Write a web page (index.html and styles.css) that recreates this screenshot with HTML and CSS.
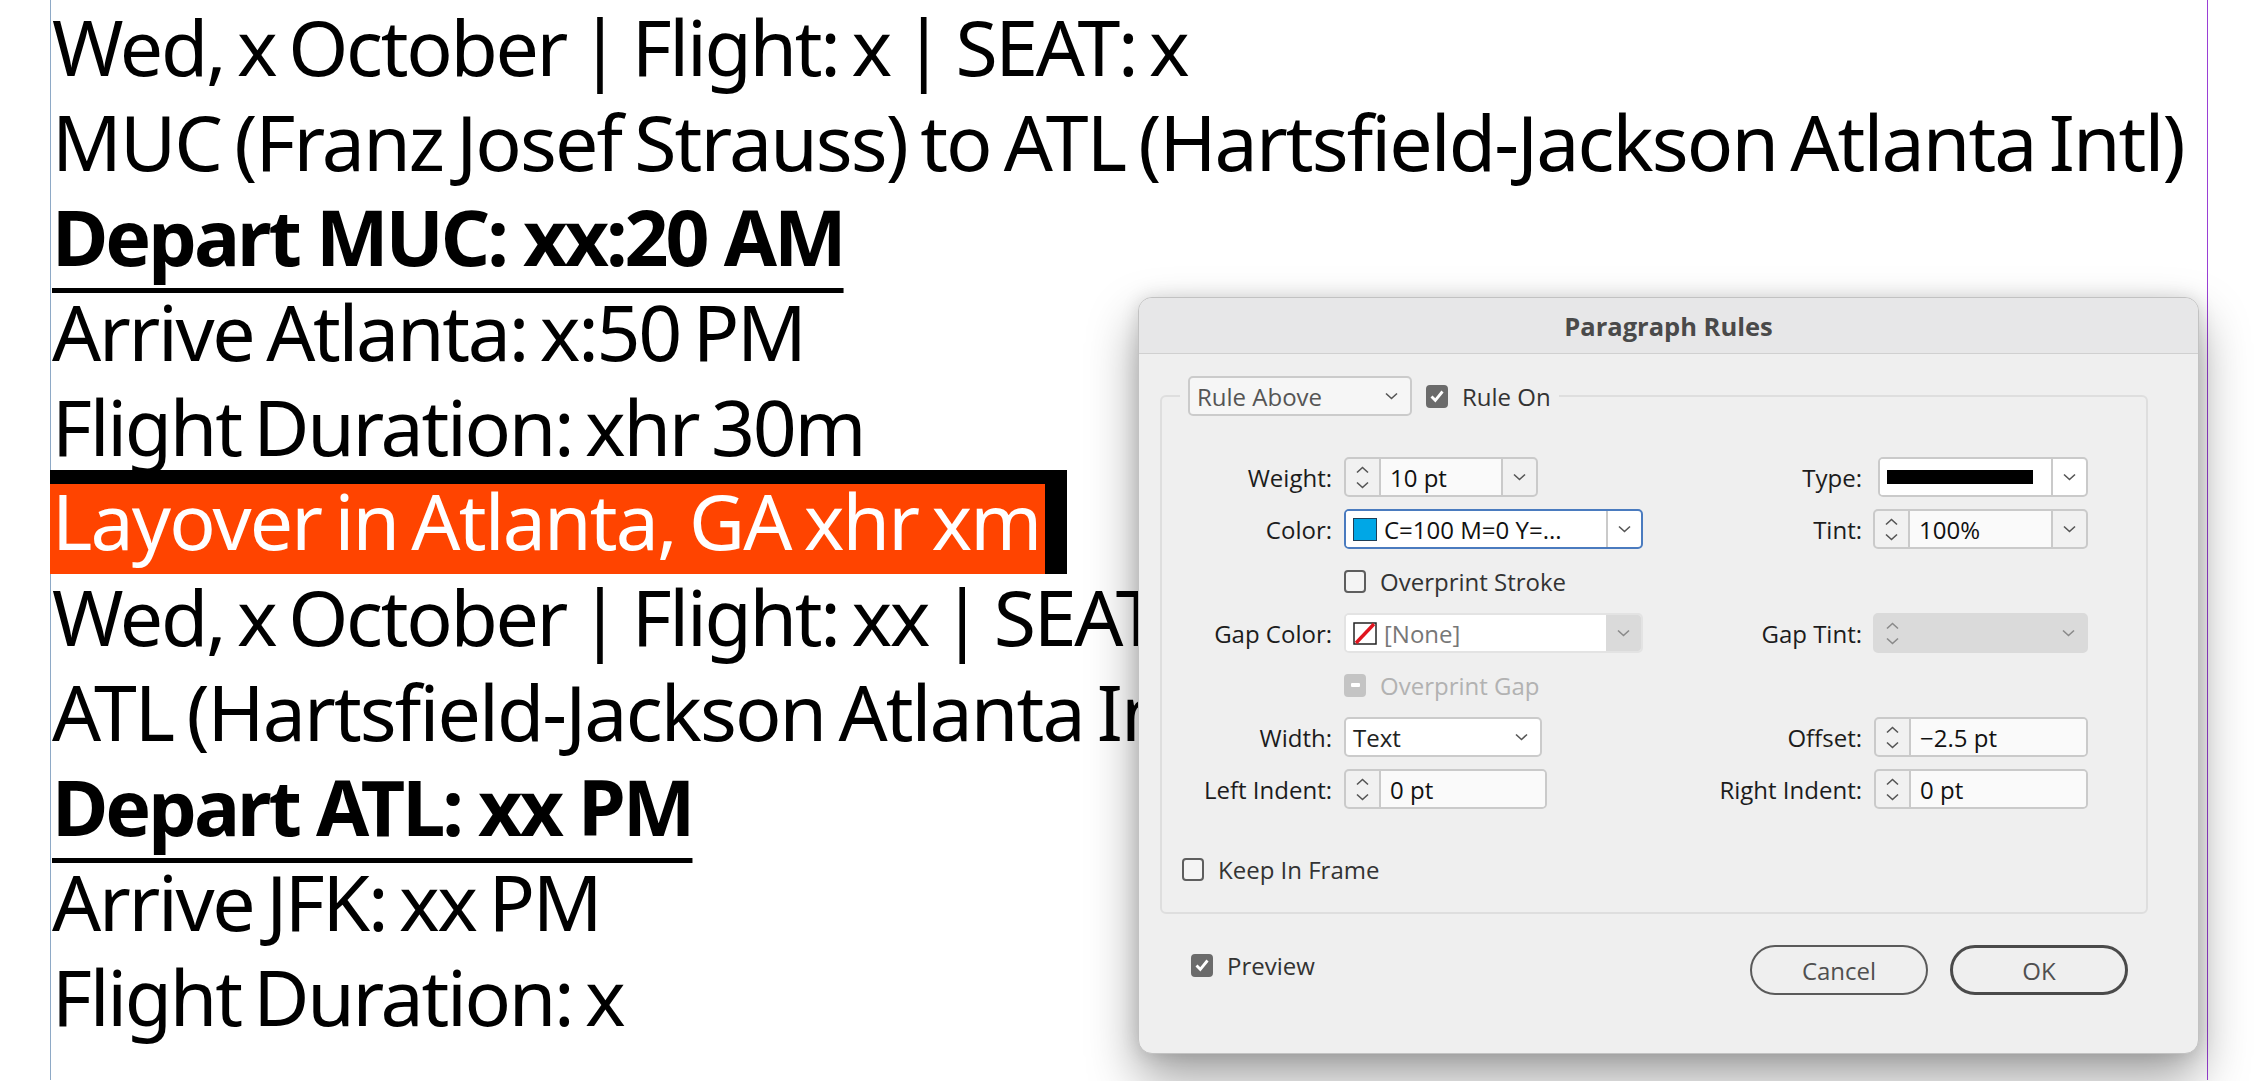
FILE: index.html
```html
<!DOCTYPE html>
<html lang="en">
<head>
<meta charset="utf-8">
<title>Paragraph Rules</title>
<link rel="stylesheet" href="styles.css">
</head>
<body>
<div class="frame">
  <div class="doc">
    <p class="ln">Wed, x October | Flight: x | SEAT: x</p>
    <p class="ln route">MUC (Franz Josef Strauss) to ATL (Hartsfield-Jackson Atlanta Intl)</p>
    <p class="ln bold"><span class="rule">Depart MUC: xx:20 AM</span></p>
    <p class="ln">Arrive Atlanta: x:50 PM</p>
    <p class="ln">Flight Duration: xhr 30m</p>
    <p class="ln layover"><span class="rule-above"><span class="shade">Layover in Atlanta, GA xhr xm</span></span></p>
    <p class="ln">Wed, x October | Flight: xx | SEAT: xx</p>
    <p class="ln route">ATL (Hartsfield-Jackson Atlanta Intl) to JFK</p>
    <p class="ln bold"><span class="rule">Depart ATL: xx PM</span></p>
    <p class="ln">Arrive JFK: xx PM</p>
    <p class="ln">Flight Duration: x</p>
  </div>
</div>

<div class="dialog">
  <div class="titlebar">Paragraph Rules</div>
  <fieldset class="group">
    <legend class="legend">
      <div class="legend-row">
        <div class="sel rule-sel"><span>Rule Above</span><svg class="chev" width="13" height="8" viewBox="0 0 13 8"><path d="M1 1.5l5.5 5 5.5-5"/></svg></div>
        <span class="cb on"><svg width="16" height="14" viewBox="0 0 16 14"><path d="M2.5 7.5l3.8 3.8L13.5 2.5"/></svg></span>
        <span class="cb-label">Rule On</span>
      </div>
    </legend>

    <div class="grid">
      <div class="lbl">Weight:</div>
      <div class="combo w194">
        <div class="spin"><svg class="chev" width="13" height="8" viewBox="0 0 13 8"><path d="M1 6.5l5.5-5 5.5 5"/></svg><svg class="chev" width="13" height="8" viewBox="0 0 13 8"><path d="M1 1.5l5.5 5 5.5-5"/></svg></div>
        <div class="val">10 pt</div>
        <div class="dd"><svg class="chev" width="13" height="8" viewBox="0 0 13 8"><path d="M1 1.5l5.5 5 5.5-5"/></svg></div>
      </div>
      <div class="lbl">Type:</div>
      <div class="combo w210 right white">
        <div class="val"><span class="stroke-sample"></span></div>
        <div class="dd"><svg class="chev" width="13" height="8" viewBox="0 0 13 8"><path d="M1 1.5l5.5 5 5.5-5"/></svg></div>
      </div>

      <div class="lbl">Color:</div>
      <div class="combo w299 focus white">
        <div class="val"><span class="swatch cyan"></span><span>C=100 M=0 Y=...</span></div>
        <div class="dd"><svg class="chev" width="13" height="8" viewBox="0 0 13 8"><path d="M1 1.5l5.5 5 5.5-5"/></svg></div>
      </div>
      <div class="lbl">Tint:</div>
      <div class="combo w215 right">
        <div class="spin"><svg class="chev" width="13" height="8" viewBox="0 0 13 8"><path d="M1 6.5l5.5-5 5.5 5"/></svg><svg class="chev" width="13" height="8" viewBox="0 0 13 8"><path d="M1 1.5l5.5 5 5.5-5"/></svg></div>
        <div class="val">100%</div>
        <div class="dd"><svg class="chev" width="13" height="8" viewBox="0 0 13 8"><path d="M1 1.5l5.5 5 5.5-5"/></svg></div>
      </div>

      <div class="lbl"></div>
      <div class="chk"><span class="cb"></span><span class="cb-label">Overprint Stroke</span></div>
      <div class="lbl"></div>
      <div></div>

      <div class="lbl">Gap Color:</div>
      <div class="combo w299 gap">
        <div class="val"><svg class="swatch-none" width="24" height="23" viewBox="0 0 24 23"><rect x="1" y="1" width="22" height="21" fill="#fff" stroke="#222" stroke-width="1.5"/><path d="M3 21L21 2" stroke="#e0141e" stroke-width="3.4"/></svg><span class="muted">[None]</span></div>
        <div class="dd"><svg class="chev dim" width="13" height="8" viewBox="0 0 13 8"><path d="M1 1.5l5.5 5 5.5-5"/></svg></div>
      </div>
      <div class="lbl">Gap Tint:</div>
      <div class="combo w215 right disabled">
        <div class="spin"><svg class="chev dim" width="13" height="8" viewBox="0 0 13 8"><path d="M1 6.5l5.5-5 5.5 5"/></svg><svg class="chev dim" width="13" height="8" viewBox="0 0 13 8"><path d="M1 1.5l5.5 5 5.5-5"/></svg></div>
        <div class="val"></div>
        <div class="dd"><svg class="chev dim" width="13" height="8" viewBox="0 0 13 8"><path d="M1 1.5l5.5 5 5.5-5"/></svg></div>
      </div>

      <div class="lbl"></div>
      <div class="chk"><span class="cb mixed"><span class="dash"></span></span><span class="cb-label faint">Overprint Gap</span></div>
      <div class="lbl"></div>
      <div></div>

      <div class="lbl">Width:</div>
      <div class="sel w198 white"><span class="dark">Text</span><svg class="chev" width="13" height="8" viewBox="0 0 13 8"><path d="M1 1.5l5.5 5 5.5-5"/></svg></div>
      <div class="lbl">Offset:</div>
      <div class="combo w214 right">
        <div class="spin"><svg class="chev" width="13" height="8" viewBox="0 0 13 8"><path d="M1 6.5l5.5-5 5.5 5"/></svg><svg class="chev" width="13" height="8" viewBox="0 0 13 8"><path d="M1 1.5l5.5 5 5.5-5"/></svg></div>
        <div class="val">&minus;2.5 pt</div>
      </div>

      <div class="lbl">Left Indent:</div>
      <div class="combo w203">
        <div class="spin"><svg class="chev" width="13" height="8" viewBox="0 0 13 8"><path d="M1 6.5l5.5-5 5.5 5"/></svg><svg class="chev" width="13" height="8" viewBox="0 0 13 8"><path d="M1 1.5l5.5 5 5.5-5"/></svg></div>
        <div class="val">0 pt</div>
      </div>
      <div class="lbl">Right Indent:</div>
      <div class="combo w214 right">
        <div class="spin"><svg class="chev" width="13" height="8" viewBox="0 0 13 8"><path d="M1 6.5l5.5-5 5.5 5"/></svg><svg class="chev" width="13" height="8" viewBox="0 0 13 8"><path d="M1 1.5l5.5 5 5.5-5"/></svg></div>
        <div class="val">0 pt</div>
      </div>
    </div>

    <div class="chk keep"><span class="cb"></span><span class="cb-label">Keep In Frame</span></div>
  </fieldset>

  <div class="footer">
    <div class="chk preview"><span class="cb on"><svg width="16" height="14" viewBox="0 0 16 14"><path d="M2.5 7.5l3.8 3.8L13.5 2.5"/></svg></span><span class="cb-label">Preview</span></div>
    <div class="buttons">
      <div class="btn">Cancel</div>
      <div class="btn ok">OK</div>
    </div>
  </div>
</div>
</body>
</html>
```

FILE: styles.css
```css
* { box-sizing: border-box; }
html, body { margin: 0; padding: 0; background: #fff; }
body {
  width: 2266px;
  height: 1081px;
  overflow: hidden;
  position: relative;
  font-family: "Noto Sans", "Open Sans", sans-serif;
}

/* document text frame */
.frame {
  margin-left: 50px;
  width: 2158px;
  height: 1081px;
  border-left: 1px solid #8ea9c6;
  border-right: 1px solid #9a3fd6;
  padding-left: 1px;
}
.doc { margin-top: -1px; }
.ln {
  margin: 0;
  height: 95px;
  line-height: 95px;
  font-size: 77px;
  letter-spacing: -2.3px;
  word-spacing: -5px;
  white-space: nowrap;
  color: #000;
}
.ln.route { letter-spacing: -1.9px; }
.bold { font-weight: 700; letter-spacing: -3px; word-spacing: 0; }
.rule {
  text-decoration: underline;
  text-decoration-thickness: 5px;
  text-underline-offset: 22px;
  text-decoration-skip-ink: none;
}
.layover { display: flex; align-items: flex-start; }
.rule-above {
  display: block;
  background: #000;
  margin: -4px 0 0 -2px;
  padding: 14px 22px 0 0;
}
.shade {
  display: block;
  height: 90px;
  line-height: 74px;
  background: #ff4400;
  color: #fff;
  letter-spacing: -1.85px;
  padding: 0 4px 0 2px;
}

/* dialog */
.dialog {
  position: absolute;
  left: 1138px;
  top: 297px;
  width: 1061px;
  height: 757px;
  border: 1px solid #c2c2c2;
  border-radius: 14px;
  background: #efefef;
  overflow: hidden;
  box-shadow: 0 24px 50px rgba(0,0,0,0.38), 0 0 18px rgba(0,0,0,0.12);
  font-family: "Open Sans", "Noto Sans", sans-serif;
  font-size: 24px;
  color: #1c1c1c;
  display: flex;
  flex-direction: column;
}
.titlebar {
  height: 56px;
  flex: none;
  background: #e7e7e8;
  border-bottom: 1px solid #d0d0d0;
  display: flex;
  align-items: center;
  justify-content: center;
  font-weight: 700;
  font-size: 25.5px;
  color: #4a4a4a;
}
.group {
  margin: 22px 50px 0 21px;
  padding: 0 0 26px 0;
  border: 2px solid #dedede;
  border-radius: 6px;
  min-width: 0;
}
.legend { margin-left: 18px; padding: 0 8px; }
.legend-row { display: flex; align-items: center; height: 40px; }
.legend-row .cb { margin-left: 14px; }
.legend-row .cb-label { margin-left: 14px; }

.chev { display: block; flex: none; }
.chev path { fill: none; stroke: #555; stroke-width: 1.6; }
.chev.dim path { stroke: #8a8a8a; }

.sel {
  height: 40px;
  border: 2px solid #cbcbcb;
  border-radius: 5px;
  background: #f6f6f6;
  display: flex;
  align-items: center;
  justify-content: space-between;
  padding: 0 12px 0 7px;
  color: #555;
}
.rule-sel { width: 224px; }
.sel.white { background: #fff; }
.dark { color: #222; }

.cb {
  width: 22px;
  height: 23px;
  flex: none;
  border: 2px solid #5e5e5e;
  border-radius: 4px;
  display: flex;
  align-items: center;
  justify-content: center;
  background: #f4f4f4;
}
.cb.on { background: #6b6b6b; border-color: #6b6b6b; }
.cb.on path { fill: none; stroke: #fff; stroke-width: 2.8; }
.cb.mixed { background: #c4c4c4; border-color: #c4c4c4; }
.dash { width: 9px; height: 4px; background: #fff; border-radius: 1px; }
.cb-label { color: #333; }
.faint { color: #b2b2b2; }
.muted { color: #777; }

.grid {
  margin-top: 41px;
  display: grid;
  grid-template-columns: 170px 310px 196px 214px;
  grid-auto-rows: 40px;
  column-gap: 12px;
  row-gap: 12px;
}
.lbl { align-self: center; text-align: right; color: #1c1c1c; white-space: nowrap; }
.chk { display: flex; align-items: center; gap: 14px; }

.combo {
  height: 40px;
  display: flex;
  border: 2px solid #cacaca;
  border-radius: 5px;
  overflow: hidden;
  background: #f1f1f1;
}
.combo.right { justify-self: end; }
.combo.white { background: #fff; }
.combo.white .val { background: #fff; }
.combo.focus { border-color: #4a7bbf; }
.spin {
  width: 35px;
  flex: none;
  display: flex;
  flex-direction: column;
  align-items: center;
  justify-content: center;
  gap: 7px;
  border-right: 2px solid #cacaca;
}
.val {
  flex: 1;
  min-width: 0;
  background: #fafafa;
  display: flex;
  align-items: center;
  padding-left: 9px;
  color: #111;
  white-space: nowrap;
}
.dd {
  width: 35px;
  flex: none;
  display: flex;
  align-items: center;
  justify-content: center;
  border-left: 2px solid #cacaca;
}
.w194 { width: 194px; }
.w198 { width: 198px; }
.w203 { width: 203px; }
.w210 { width: 210px; }
.w214 { width: 214px; }
.w215 { width: 215px; }
.w299 { width: 299px; }

.stroke-sample { display: block; width: 146px; height: 14px; background: #000; margin-left: -2px; }
.swatch { width: 24px; height: 23px; flex: none; margin: 0 7px 0 -2px; border: 1.5px solid #1e3e56; }
.swatch.cyan { background: #00a7e6; }
.swatch-none { flex: none; margin: 0 7px 0 -2px; }

.combo.gap { border-color: #e3e3e3; background: #fff; }
.combo.gap .val { background: #fff; }
.combo.gap .dd { background: #dadada; border-left: none; }
.combo.disabled { border-color: #dadada; background: #dadada; }
.combo.disabled .spin, .combo.disabled .dd { border: none; }
.combo.disabled .val { background: #dadada; }

.keep { margin-top: 44px; padding-left: 20px; }

.footer {
  margin-top: 31px;
  height: 50px;
  display: flex;
  align-items: center;
  justify-content: space-between;
  padding: 0 70px 0 52px;
}
.preview { margin-bottom: 10px; }
.buttons { display: flex; gap: 22px; }
.btn {
  width: 178px;
  height: 50px;
  border: 2px solid #5a5a5a;
  border-radius: 25px;
  display: flex;
  align-items: center;
  justify-content: center;
  color: #505050;
}
.btn.ok { border: 3px solid #4a4a4a; }
```
